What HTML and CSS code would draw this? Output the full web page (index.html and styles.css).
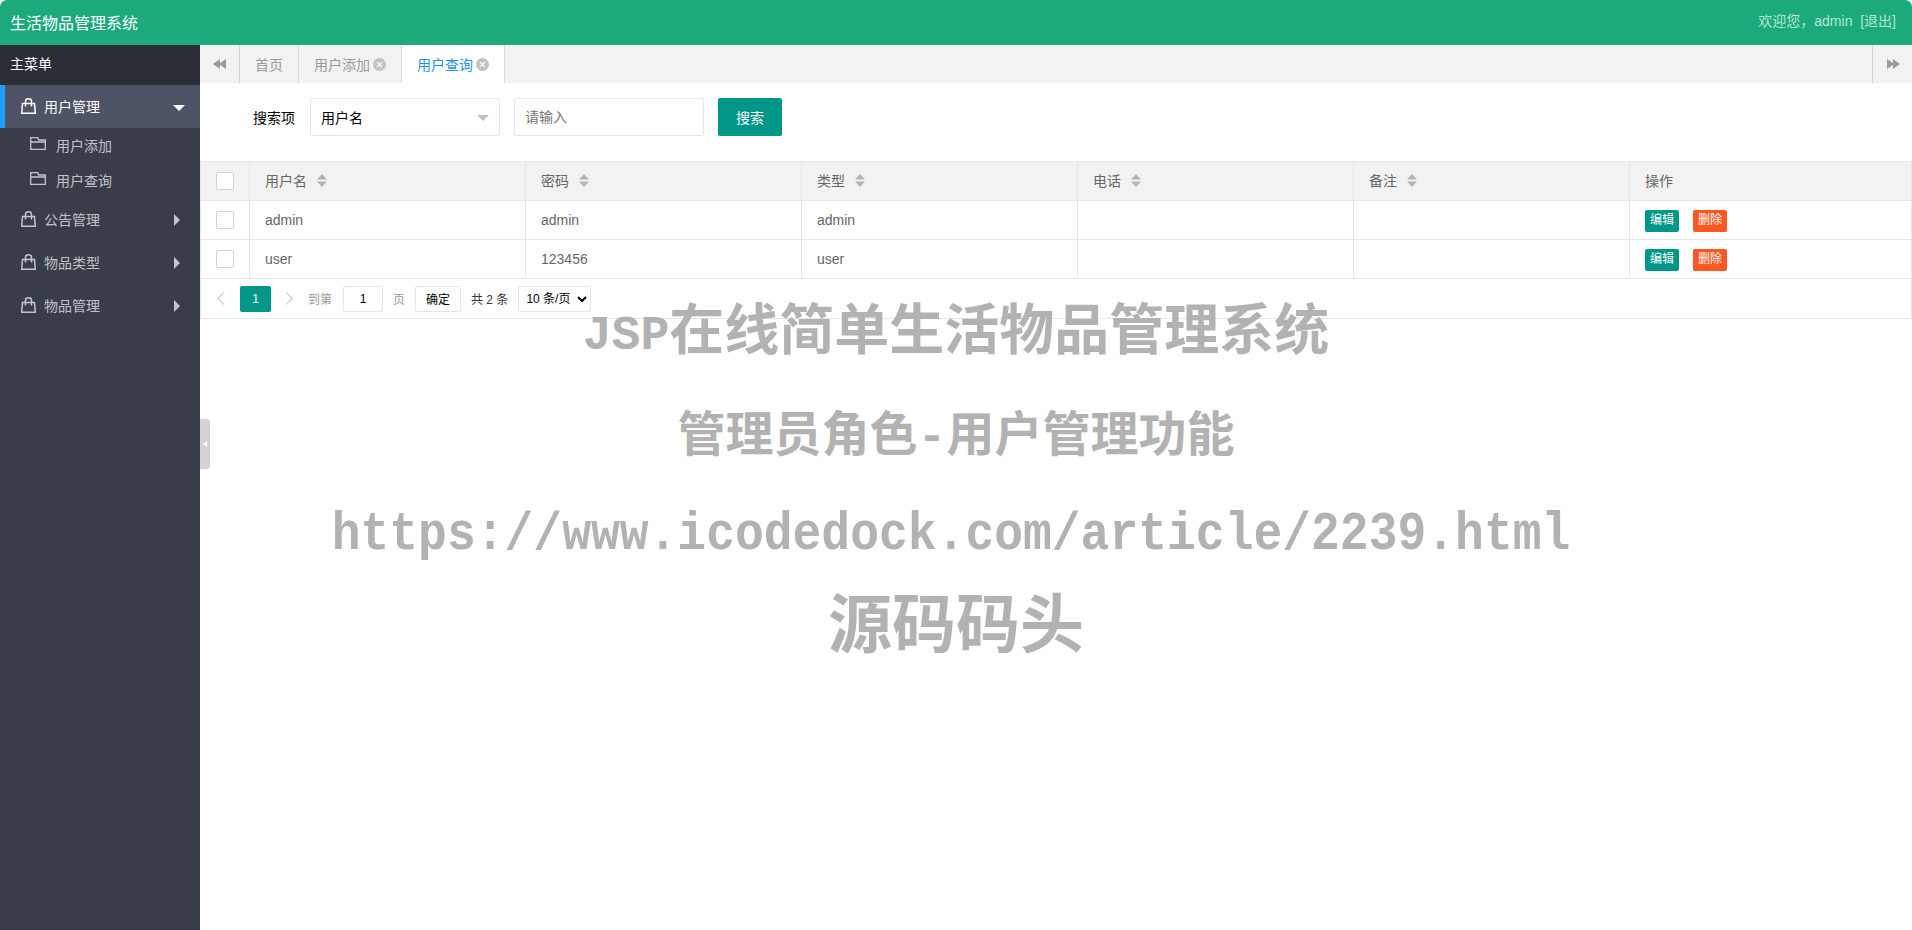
FILE: index.html
```html
<!DOCTYPE html>
<html lang="zh-CN">
<head>
    <meta charset="UTF-8">
    <title>生活物品管理系统</title>
    <link rel="stylesheet" href="styles.css">
</head>
<body>
    <svg class="icon-defs" width="0" height="0">
        <symbol id="bag" viewBox="0 0 15 16">
            <path d="M1.500 5.500h12l.8 9.800H.7z M4.500 8.500V3.200C4.500 1.700 5.800.8 7.500.8s3 .9 3 2.400v5.300" fill="none" stroke="currentColor" stroke-width="1.500"/>
        </symbol>
        <symbol id="folder" viewBox="0 0 16 13">
            <path d="M.7.700h7l1 2.300h6.600v9.300H.7z M.7 5h14.600" fill="none" stroke="currentColor" stroke-width="1.300"/>
        </symbol>
        <symbol id="close" viewBox="0 0 12 12">
            <circle cx="6" cy="6" r="6" fill="#c2c2c2"/>
            <path d="M3.800 3.800l4.400 4.400M8.200 3.800l-4.400 4.400" stroke="#f2f2f2" stroke-width="1.400"/>
        </symbol>
        <symbol id="sort" viewBox="0 0 9 12">
            <path d="M4.500 0L9 5H0zM4.500 12L0 7h9z" fill="#b2b2b2"/>
        </symbol>
    </svg>

    <header class="topbar">
        <div class="logo">生活物品管理系统</div>
        <div class="user-info">欢迎您，admin &nbsp;[退出]</div>
    </header>

    <div class="main">
        <aside class="sidebar">
            <div class="side-title">主菜单</div>
            <div class="nav-item active">
                <svg class="bag-icon"><use href="#bag"/></svg>
                <span class="nav-text">用户管理</span>
                <span class="caret-down"></span>
            </div>
            <div class="sub-item"><svg class="folder-icon"><use href="#folder"/></svg><span>用户添加</span></div>
            <div class="sub-item"><svg class="folder-icon"><use href="#folder"/></svg><span>用户查询</span></div>
            <div class="nav-item">
                <svg class="bag-icon"><use href="#bag"/></svg>
                <span class="nav-text">公告管理</span>
                <span class="caret-right"></span>
            </div>
            <div class="nav-item">
                <svg class="bag-icon"><use href="#bag"/></svg>
                <span class="nav-text">物品类型</span>
                <span class="caret-right"></span>
            </div>
            <div class="nav-item">
                <svg class="bag-icon"><use href="#bag"/></svg>
                <span class="nav-text">物品管理</span>
                <span class="caret-right"></span>
            </div>
        </aside>

        <section class="content">
            <div class="tabs">
                <div class="tab-arrow tab-arrow-left"><span class="tri-left"></span><span class="tri-left"></span></div>
                <div class="tab">首页</div>
                <div class="tab tab-close">用户添加<svg class="close-icon"><use href="#close"/></svg></div>
                <div class="tab tab-close tab-active">用户查询<svg class="close-icon"><use href="#close"/></svg></div>
                <div class="tab-space"></div>
                <div class="tab-arrow tab-arrow-right"><span class="tri-right"></span><span class="tri-right"></span></div>
            </div>

            <form class="search-form">
                <label class="search-label">搜索项</label>
                <div class="fake-select">用户名<span class="select-caret"></span></div>
                <input class="search-input" type="text" placeholder="请输入">
                <button class="search-btn" type="button">搜索</button>
            </form>

            <div class="table-box">
                <table class="data-table">
                    <colgroup>
                        <col class="col-check">
                        <col class="col-data"><col class="col-data"><col class="col-data"><col class="col-data"><col class="col-data">
                        <col>
                    </colgroup>
                    <thead>
                        <tr>
                            <th><span class="checkbox"></span></th>
                            <th>用户名<svg class="sort-icon"><use href="#sort"/></svg></th>
                            <th>密码<svg class="sort-icon"><use href="#sort"/></svg></th>
                            <th>类型<svg class="sort-icon"><use href="#sort"/></svg></th>
                            <th>电话<svg class="sort-icon"><use href="#sort"/></svg></th>
                            <th>备注<svg class="sort-icon"><use href="#sort"/></svg></th>
                            <th>操作</th>
                        </tr>
                    </thead>
                    <tbody>
                        <tr>
                            <td><span class="checkbox"></span></td>
                            <td>admin</td>
                            <td>admin</td>
                            <td>admin</td>
                            <td></td>
                            <td></td>
                            <td><a class="mini-btn">编辑</a><a class="mini-btn mini-danger">删除</a></td>
                        </tr>
                        <tr>
                            <td><span class="checkbox"></span></td>
                            <td>user</td>
                            <td>123456</td>
                            <td>user</td>
                            <td></td>
                            <td></td>
                            <td><a class="mini-btn">编辑</a><a class="mini-btn mini-danger">删除</a></td>
                        </tr>
                    </tbody>
                </table>
                <div class="pager">
                    <span class="chevron chevron-left"></span>
                    <span class="page-current">1</span>
                    <span class="chevron chevron-right"></span>
                    <span class="page-muted page-goto">到第</span>
                    <input class="page-input" type="text" value="1">
                    <span class="page-muted page-unit">页</span>
                    <button class="page-ok" type="button">确定</button>
                    <span class="page-count">共 2 条</span>
                    <select class="page-size"><option>10 条/页</option></select>
                </div>
            </div>
        </section>
    </div>

    <div class="side-toggle"><span></span></div>

    <div class="watermark">
        <div class="mark-one"><span class="mark-latin">JSP</span>在线简单生活物品管理系统</div>
        <div class="mark-two">管理员角色-用户管理功能</div>
        <div class="mark-three">https://www.icodedock.com/article/2239.html</div>
        <div class="mark-four">源码码头</div>
    </div>
</body>
</html>
```

FILE: styles.css
```css
* {
    box-sizing: border-box;
}
html, body {
    height: 100%;
}
body {
    margin: 0;
    overflow: hidden;
    background: #fff;
    color: #333;
    font-family: "Liberation Sans", "Noto Sans CJK SC", sans-serif;
    font-size: 14px;
}
.icon-defs {
    position: absolute;
}

/* top bar */
.topbar {
    height: 45px;
    display: flex;
    align-items: center;
    justify-content: space-between;
    padding: 0 16px 0 10px;
    background: #1caa7c;
    border-radius: 7px 7px 0 0;
}
.logo {
    color: #fff;
    font-size: 16px;
    padding-bottom: 2px;
}
.user-info {
    color: #b5e6d6;
    font-size: 14px;
    padding-bottom: 5px;
}

/* sidebar */
.main {
    display: flex;
    height: 885px;
}
.sidebar {
    width: 200px;
    flex: none;
    background: #393d49;
    color: rgba(255,255,255,0.7);
}
.side-title {
    height: 40px;
    line-height: 38px;
    padding-left: 10px;
    background: #2b2e37;
    color: #fff;
}
.nav-item {
    height: 43px;
    display: flex;
    align-items: center;
    padding-left: 21px;
    padding-right: 20px;
}
.nav-item.active {
    background: #4e5465;
    border-left: 5px solid #1e9fff;
    padding-left: 16px;
    color: #fff;
}
.bag-icon {
    width: 15px;
    height: 16px;
    margin-right: 8px;
    margin-top: -2px;
}
.nav-text {
    flex: 1;
    padding-bottom: 2px;
}
.caret-down {
    width: 0;
    height: 0;
    border-left: 6px solid transparent;
    border-right: 6px solid transparent;
    border-top: 6px solid #fff;
    margin-top: 2px;
    margin-right: -5px;
}
.caret-right {
    width: 0;
    height: 0;
    border-top: 6px solid transparent;
    border-bottom: 6px solid transparent;
    border-left: 6px solid rgba(255,255,255,0.7);
    margin-top: 1px;
}
.sub-item {
    height: 35px;
    display: flex;
    align-items: center;
    padding-left: 30px;
}
.sub-item span {
    padding-bottom: 2px;
}
.folder-icon {
    width: 16px;
    height: 13px;
    margin-right: 10px;
    margin-top: -4px;
}

/* tabs */
.content {
    flex: 1;
    min-width: 0;
}
.tabs {
    height: 38px;
    display: flex;
    background: #f2f2f2;
    color: #999;
}
.tab-arrow {
    width: 40px;
    display: flex;
    align-items: center;
    justify-content: center;
    border-right: 1px solid #d2d2d2;
}
.tab-arrow-right {
    border-right: 0;
    border-left: 1px solid #d2d2d2;
}
.tri-left {
    border-top: 5px solid transparent;
    border-bottom: 5px solid transparent;
    border-right: 7px solid #999;
    margin-left: -1px;
}
.tri-right {
    border-top: 5px solid transparent;
    border-bottom: 5px solid transparent;
    border-left: 7px solid #999;
    margin-right: -1px;
}
.tab {
    display: flex;
    align-items: center;
    padding: 0 15px;
    border-right: 1px solid #d9d9d9;
}
.tab-close {
    padding-right: 9px;
    width: 103px;
}
.tab-active {
    background: #fff;
    color: #1c94e0;
}
.close-icon {
    width: 13px;
    height: 13px;
    margin-left: 3px;
    margin-top: 1px;
}
.tab-space {
    flex: 1;
}

/* search */
.search-form {
    display: flex;
    align-items: center;
    height: 78px;
    padding: 15px 0 25px 53px;
}
.search-label {
    color: #000;
    width: 57px;
}
.fake-select {
    width: 190px;
    height: 38px;
    line-height: 38px;
    padding-left: 10px;
    border: 1px solid #e6e6e6;
    border-radius: 2px;
    color: #000;
    position: relative;
}
.select-caret {
    position: absolute;
    right: 10px;
    top: 16px;
    border-left: 6px solid transparent;
    border-right: 6px solid transparent;
    border-top: 6px solid #c2c2c2;
}
.search-input {
    width: 190px;
    height: 38px;
    margin-left: 14px;
    padding: 0 10px;
    border: 1px solid #e6e6e6;
    border-radius: 2px;
    font: inherit;
}
.search-input::placeholder {
    color: #757575;
}
.search-btn {
    width: 64px;
    height: 38px;
    margin-left: 14px;
    border: 0;
    border-radius: 2px;
    background: #009688;
    color: #fff;
    font: inherit;
}

/* table */
.table-box {
    border: 1px solid #e6e6e6;
    height: 158px;
}
.data-table {
    width: 100%;
    border-collapse: separate;
    border-spacing: 0;
    table-layout: fixed;
    color: #666;
}
.col-check {
    width: 49px;
}
.col-data {
    width: 276px;
}
.data-table th, .data-table td {
    height: 39px;
    padding: 0 0 0 15px;
    border-right: 1px solid #e6e6e6;
    border-bottom: 1px solid #e6e6e6;
    font-weight: normal;
    text-align: left;
}
.data-table th:last-child, .data-table td:last-child {
    border-right: 0;
}
.data-table th {
    background: #f2f2f2;
    padding-bottom: 2px;
}
.data-table th:first-child {
    padding-bottom: 0;
}
.checkbox {
    display: block;
    width: 18px;
    height: 18px;
    background: #fff;
    border: 1px solid #d2d2d2;
    border-radius: 2px;
}
.sort-icon {
    width: 10px;
    height: 13px;
    margin-left: 10px;
    vertical-align: -1px;
}
.mini-btn {
    display: inline-block;
    width: 34px;
    height: 22px;
    line-height: 21px;
    margin-right: 14px;
    margin-top: 2px;
    background: #009688;
    border-radius: 2px;
    color: #fff;
    font-size: 12px;
    text-align: center;
    vertical-align: middle;
}
.mini-danger {
    background: #ff5722;
}

/* pagination */
.pager {
    display: flex;
    align-items: center;
    height: 39px;
    padding-left: 15px;
    font-size: 12px;
    color: #333;
}
.chevron {
    width: 9px;
    height: 9px;
    border-top: 1.500px solid #c2c2c2;
    border-left: 1.500px solid #c2c2c2;
}
.chevron-left {
    transform: rotate(-45deg);
    margin-left: 3px;
}
.chevron-right {
    transform: rotate(135deg);
    margin-left: 11px;
}
.page-current {
    width: 31px;
    height: 26px;
    line-height: 26px;
    margin-left: 12px;
    background: #009688;
    border-radius: 2px;
    color: #fff;
    text-align: center;
}
.page-muted {
    color: #999;
}
.page-goto {
    margin-left: 17px;
}
.page-input {
    width: 40px;
    height: 26px;
    margin-left: 11px;
    border: 1px solid #e6e6e6;
    border-radius: 2px;
    color: #000;
    font: inherit;
    text-align: center;
    padding: 0;
}
.page-unit {
    margin-left: 10px;
}
.page-ok {
    width: 46px;
    height: 26px;
    margin-left: 10px;
    padding: 0;
    border: 1px solid #e6e6e6;
    border-radius: 2px;
    background: #fff;
    color: #000;
    font: inherit;
}
.page-count {
    margin-left: 10px;
}
.page-size {
    width: 73px;
    height: 26px;
    margin-left: 10px;
    padding-left: 3px;
    border: 1px solid #e6e6e6;
    border-radius: 2px;
    background: #fff;
    color: #000;
    font: inherit;
}

/* collapse handle */
.side-toggle {
    position: absolute;
    left: 200px;
    top: 419px;
    width: 10px;
    height: 50px;
    display: flex;
    align-items: center;
    justify-content: center;
    background: #d2d2d2;
    border-radius: 0 3px 3px 0;
}
.side-toggle span {
    border-top: 3px solid transparent;
    border-bottom: 3px solid transparent;
    border-right: 4px solid #fff;
}

/* big text laid over the page */
.watermark {
    position: absolute;
    left: 0;
    top: 0;
    width: 100%;
    padding-top: 295px;
    color: #b2b2b2;
    font-family: "Liberation Mono", "Noto Sans CJK SC", monospace;
    font-weight: bold;
    text-align: center;
    pointer-events: none;
}
.mark-one {
    font-size: 55px;
    line-height: 80px;
    height: 80px;
}
.mark-latin {
    font-size: 48px;
}
.mark-two {
    font-size: 48px;
    line-height: 80px;
    height: 80px;
    margin-top: 23px;
}
.mark-three {
    font-size: 48px;
    line-height: 80px;
    height: 80px;
    margin-top: 17px;
    padding-right: 10px;
    transform: scaleY(1.1);
}
.mark-four {
    font-size: 64px;
    line-height: 90px;
    height: 90px;
    margin-top: 10px;
}
```
